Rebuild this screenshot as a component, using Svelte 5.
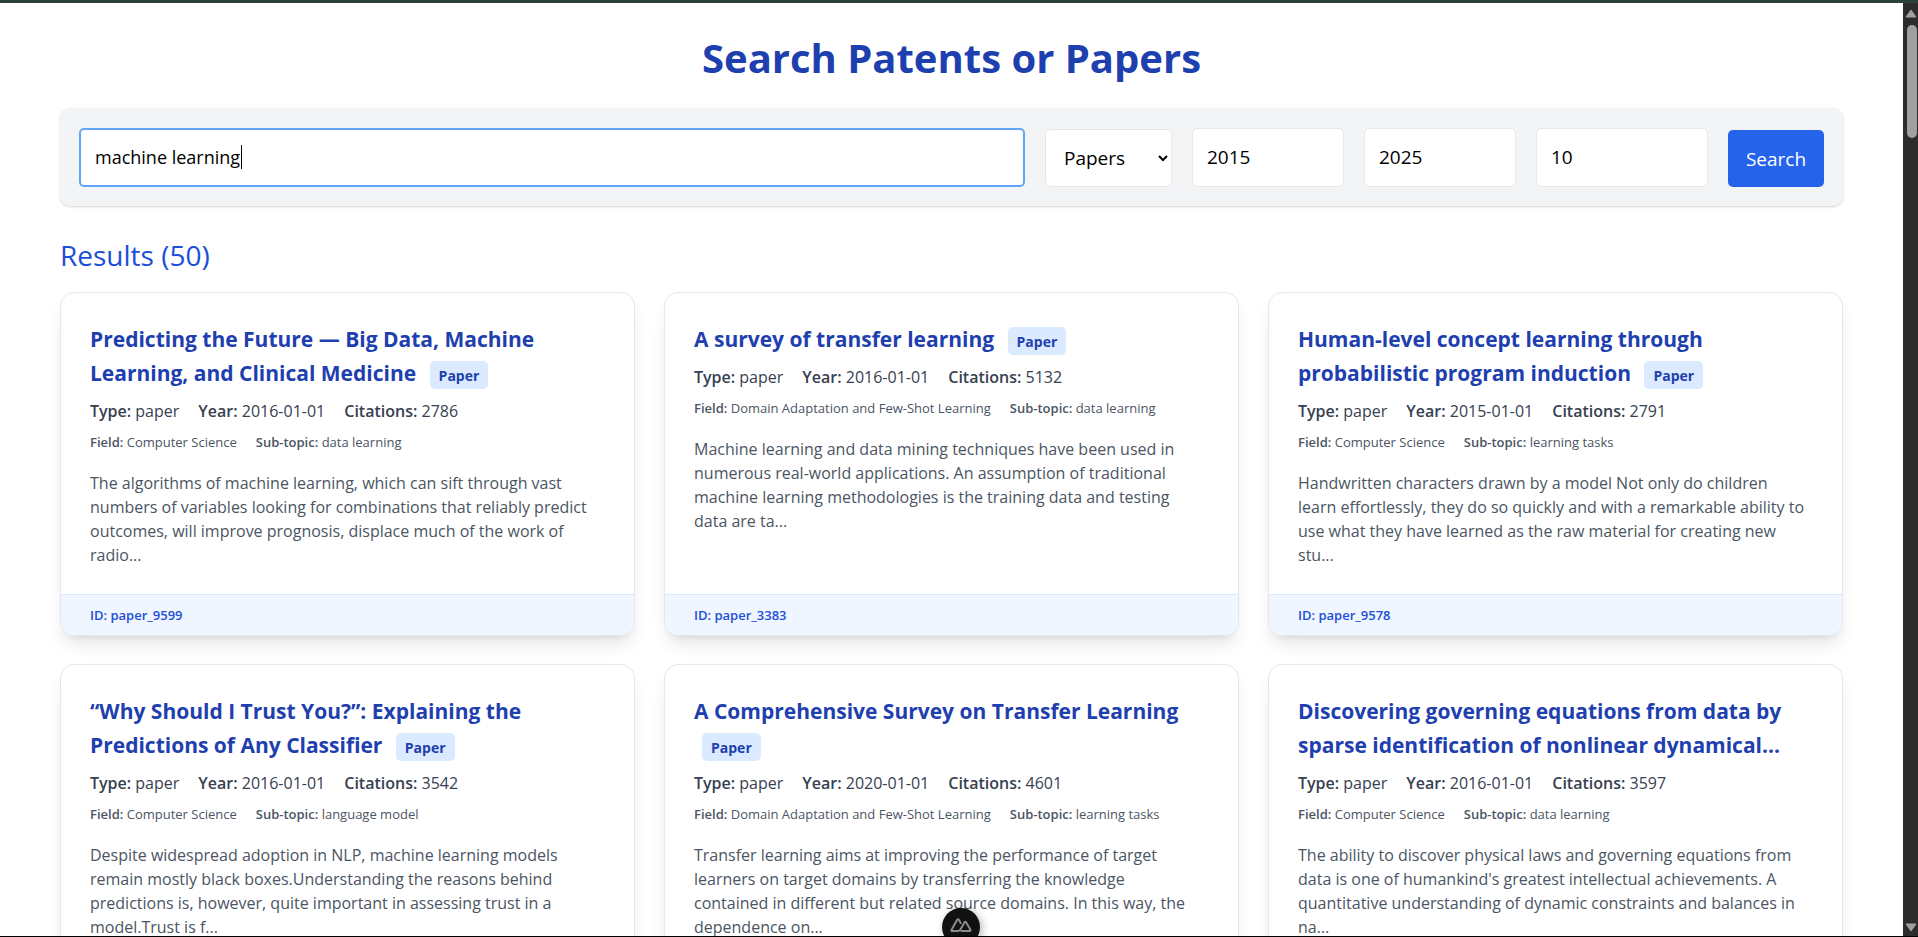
<script>
  let query = $state('machine learning');
  let kind = $state('Papers');
  let yearFrom = $state('2015');
  let yearTo = $state('2025');
  let limit = $state('10');

  const results = [
    { title: 'Predicting the Future — Big Data, Machine Learning, and Clinical Medicine', badge: true, year: '2016-01-01', citations: 2786, field: 'Computer Science', topic: 'data learning', id: 'paper_9599', text: 'The algorithms of machine learning, which can sift through vast numbers of variables looking for combinations that reliably predict outcomes, will improve prognosis, displace much of the work of radio...' },
    { title: 'A survey of transfer learning', badge: true, year: '2016-01-01', citations: 5132, field: 'Domain Adaptation and Few-Shot Learning', topic: 'data learning', id: 'paper_3383', text: 'Machine learning and data mining techniques have been used in numerous real-world applications. An assumption of traditional machine learning methodologies is the training data and testing data\u00a0are ta...' },
    { title: 'Human-level concept learning through probabilistic program induction', badge: true, year: '2015-01-01', citations: 2791, field: 'Computer Science', topic: 'learning tasks', id: 'paper_9578', text: 'Handwritten characters drawn by a model Not only do children learn\u00a0effortlessly, they do so quickly and with a remarkable ability to use what they have learned as the raw material for creating new stu...' },
    { title: '“Why Should I Trust You?”: Explaining the Predictions of Any Classifier', badge: true, year: '2016-01-01', citations: 3542, field: 'Computer Science', topic: 'language model', text: 'Despite widespread adoption in NLP, machine learning models remain mostly black boxes.Understanding the reasons behind predictions is, however, quite important in assessing trust in a model.Trust is f...' },
    { title: 'A Comprehensive Survey on Transfer Learning', badge: true, year: '2020-01-01', citations: 4601, field: 'Domain Adaptation and Few-Shot Learning', topic: 'learning tasks', text: 'Transfer learning aims at improving the performance of target learners on target domains by transferring the knowledge contained\u00a0in different but related source domains. In this way, the dependence on...' },
    { title: 'Discovering governing equations from data by sparse identification of nonlinear dynamical…', badge: false, year: '2016-01-01', citations: 3597, field: 'Computer Science', topic: 'data learning', text: "The ability to discover physical laws and governing equations from data is one of humankind's greatest intellectual achievements. A quantitative understanding of dynamic constraints and balances in na..." }
  ];
</script>

<div class="window">
  <div class="viewport">
    <main>
      <h1>Search Patents or Papers</h1>
      <form onsubmit={(e) => e.preventDefault()}>
        <div class="query">
          <input class="active" type="text" aria-label="Search query" bind:value={query} />
          <span class="caret"></span>
        </div>
        <select aria-label="Document kind" bind:value={kind}>
          <option>Papers</option>
          <option>Patents</option>
        </select>
        <input class="year" type="text" inputmode="numeric" aria-label="From year" bind:value={yearFrom} />
        <input class="year" type="text" inputmode="numeric" aria-label="To year" bind:value={yearTo} />
        <input class="limit" type="text" inputmode="numeric" aria-label="Result limit" bind:value={limit} />
        <button type="submit">Search</button>
      </form>

      <h2>Results (50)</h2>
      <div class="grid">
        {#each results as r}
          <article>
            <div class="body">
              <h3>{r.title}{#if r.badge}{' '}<span class="badge">Paper</span>{/if}</h3>
              <p class="meta"><span><b>Type:</b> paper</span><span><b>Year:</b> {r.year}</span><span><b>Citations:</b> {r.citations}</span></p>
              <p class="topics"><span><b>Field:</b> {r.field}</span><span><b>Sub-topic:</b> {r.topic}</span></p>
              <p class="abstract">{r.text}</p>
            </div>
            {#if r.id}<footer>ID: {r.id}</footer>{/if}
          </article>
        {/each}
      </div>
    </main>
    <button class="devtools" type="button" aria-label="Toggle developer tools">
      <svg viewBox="0 0 22 16" width="22" height="16" fill="none" stroke="#8b8b8b" stroke-width="2" stroke-linejoin="round" stroke-linecap="round">
        <path d="M7.5 14H2.2Q1 14 1.6 12.8L7 3Q8 1.4 9 3L10.6 6" />
        <path d="M11.5 14H19.6Q21 14 20.4 12.8L16.2 5.4Q15.3 4 14.4 5.4L10.5 12.4Q9.6 14 7.5 14" />
      </svg>
    </button>
  </div>
  <div class="scrollbar">
    <svg viewBox="0 0 12 9" width="12" height="9"><path d="M6 1L11 8H1Z" fill="#a0a0a0" stroke="#a0a0a0" stroke-linejoin="round" /></svg>
    <div class="track"><div class="thumb"></div></div>
    <svg viewBox="0 0 12 9" width="12" height="9"><path d="M6 8L11 1H1Z" fill="#a0a0a0" stroke="#a0a0a0" stroke-linejoin="round" /></svg>
  </div>
</div>

<style>
  :global(body) { margin: 0; overflow: hidden; }
  .window {
    display: flex; height: 100vh; box-sizing: border-box;
    border-top: 3px solid #2a423e; border-bottom: 1px solid #000;
    font-family: "Open Sans", "Noto Sans", sans-serif; background: #fff;
  }
  .viewport { position: relative; flex: 1; min-width: 0; overflow: hidden; }
  main { padding: 31px 60px; }
  h1 { margin: 0 0 26px; text-align: center; font-size: 40px; line-height: 48px; font-weight: 700; color: #1e40af; }
  form {
    display: flex; align-items: flex-end; gap: 20px; padding: 20px 19px 19px;
    background: #f3f4f6; border-radius: 10px; box-shadow: 0 1px 3px rgba(0,0,0,.1), 0 1px 2px rgba(0,0,0,.08);
  }
  input, select, form button { box-sizing: border-box; font: 19px/28px "Open Sans", "Noto Sans", sans-serif; border-radius: 5px; }
  input, select { border: 1px solid #e5e7eb; background: #fff; color: #000; }
  input { height: 59px; padding: 0 14px 1px; outline: none; min-width: 0; }
  .query { position: relative; flex: 1; display: flex; }
  .query input { flex: 1; }
  .active { border: 2px solid #60a5fa; font-size: 18px; }
  .caret { position: absolute; left: 162px; top: 17px; width: 1px; height: 24px; background: #000; }
  select { width: 127px; height: 58px; padding: 0 14px; }
  .year { width: 152px; }
  .limit { width: 172px; }
  form button { width: 96px; height: 57px; border: 0; padding: 0; background: #2563eb; color: #fff; }
  h2 { margin: 32px 0 20px; font-size: 28px; line-height: 34px; font-weight: 400; color: #1d4ed8; }
  .grid { display: grid; grid-template-columns: repeat(3, minmax(0, 1fr)); gap: 28px 29px; }
  article {
    display: flex; flex-direction: column; overflow: hidden; background: #fff;
    border: 1px solid #e5e7eb; border-radius: 14px;
    box-shadow: 0 12px 18px -4px rgba(0,0,0,.1), 0 5px 7px -5px rgba(0,0,0,.1);
  }
  .body { flex: 1; padding: 29px 29px 27px; }
  h3 { margin: 0 0 9px; font-size: 21px; line-height: 34px; font-weight: 700; color: #1e40af; }
  .badge { margin-left: 8px; padding: 5px 9px 4px; border-radius: 5px; background: #dbeafe; font-size: 14px; line-height: 19px; }
  p { margin: 0; }
  .meta, .topics { display: flex; gap: 19px; }
  b { font-weight: 600; }
  .meta { font-size: 16px; line-height: 24px; color: #374151; margin-bottom: 10px; }
  .topics { font-size: 13px; line-height: 19px; color: #4b5563; margin-bottom: 19px; }
  .abstract { padding-right: 4px; font-size: 16px; line-height: 24px; color: #4b5563; }
  footer { padding: 11px 29px 10px; border-top: 1px solid #dbeafe; background: #eff6ff; font-size: 13px; line-height: 19px; font-weight: 600; color: #1d4ed8; }
  .devtools {
    position: absolute; left: 50%; bottom: -10px; margin-left: -10px; width: 38px; height: 38px;
    display: flex; justify-content: center; padding: 9px 0 0; border: 0; border-radius: 19px; background: #111;
    box-shadow: 2px 2px 8px rgba(0,0,0,.3);
  }
  .scrollbar { width: 15px; display: flex; flex-direction: column; align-items: center; gap: 7px; padding: 6px 0 4px; box-sizing: border-box; background: #2c2c2c; }
  .track { flex: 1; width: 10px; margin-left: 2px; }
  .thumb { height: 113px; border-radius: 5px; background: #a0a0a0; }
</style>
